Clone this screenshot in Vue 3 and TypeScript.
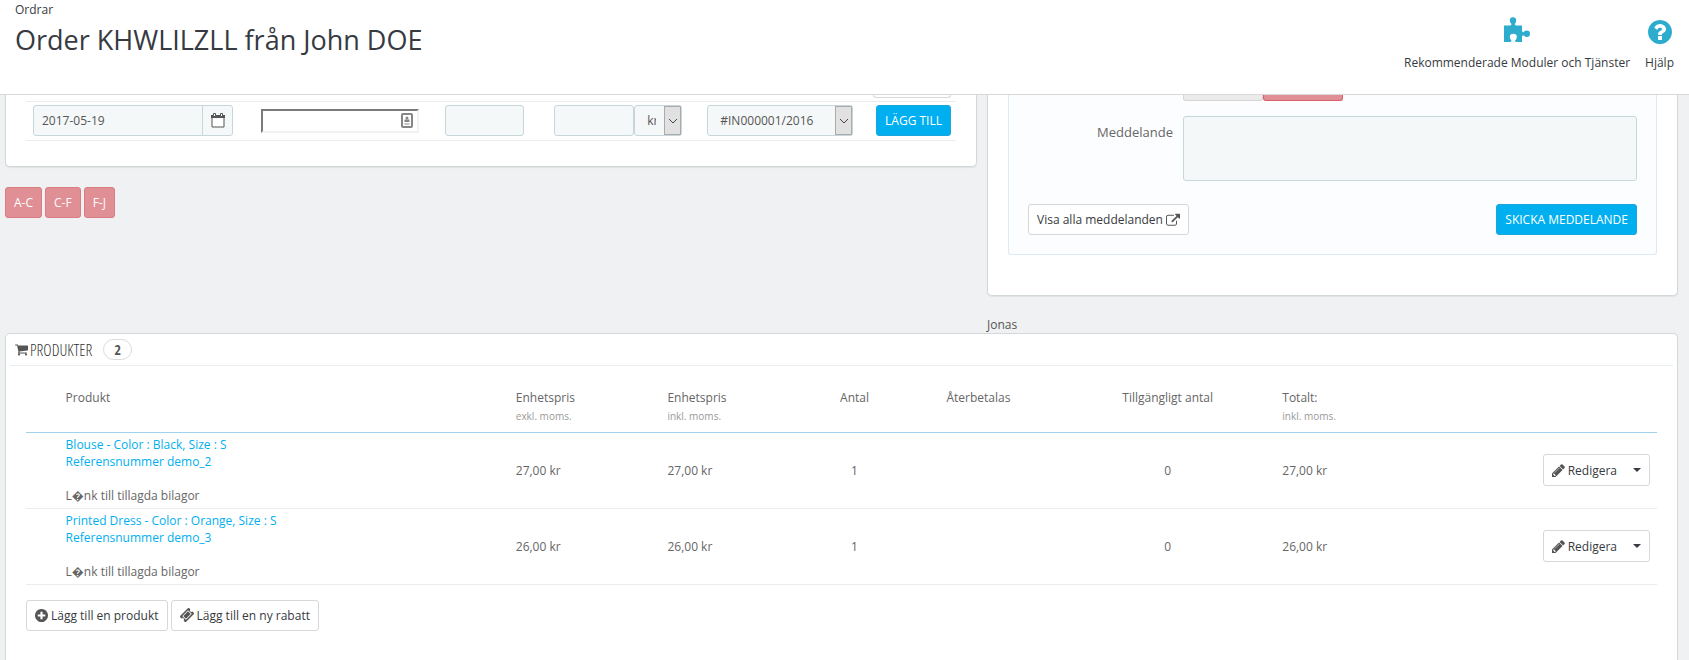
<script setup lang="ts">
import { ref } from 'vue'

interface Column { label: string; note?: string; kind: string }
interface Product { name: string; reference: string; excl: string; incl: string; quantity: number; available: number; total: string }

const date = ref('2017-05-19')
const method = ref('')
const transaction = ref('')
const amount = ref('')
const currency = ref('kr')
const invoice = ref('#IN000001/2016')
const message = ref('')

const attachmentText = 'L\uFFFDnk till tillagda bilagor'
const groups = ['A-C', 'C-F', 'F-J']

const columns: Column[] = [
  { label: 'Produkt', kind: 'product' },
  { label: 'Enhetspris', note: 'exkl. moms.', kind: 'price' },
  { label: 'Enhetspris', note: 'inkl. moms.', kind: 'price' },
  { label: 'Antal', kind: 'quantity' },
  { label: 'Återbetalas', kind: 'refund' },
  { label: 'Tillgängligt antal', kind: 'available' },
  { label: 'Totalt:', note: 'inkl. moms.', kind: 'total' },
]

const products: Product[] = [
  { name: 'Blouse - Color : Black, Size : S', reference: 'Referensnummer demo_2', excl: '27,00 kr', incl: '27,00 kr', quantity: 1, available: 0, total: '27,00 kr' },
  { name: 'Printed Dress - Color : Orange, Size : S', reference: 'Referensnummer demo_3', excl: '26,00 kr', incl: '26,00 kr', quantity: 1, available: 0, total: '26,00 kr' },
]
</script>

<template>
  <div class="page">
    <header class="head">
      <div class="titles">
        <a class="crumb" href="#">Ordrar</a>
        <h1>Order KHWLILZLL från John DOE</h1>
      </div>
      <nav class="tools">
        <a href="#">
          <svg class="tool-icon" viewBox="0 0 26 26"><path d="M0 8.500h5.500q2 0 2-1.500Q5.800 5.500 5.800 3.500 5.800.3 9 .3t3.200 3.200Q12.200 5.500 10.800 7q0 1.500 2 1.500H18v5q0 1.800 1.500 1.800Q21 13.500 22.800 13.500q3.200 0 3.200 3.200t-3.200 3.200Q21 19.900 19.500 18.200 18 18.200 18 20v5h-5.500q-1.500 0-1.500-1.500 1.800-1.500 1.800-3.500 0-3.200-3.500-3.200T5.800 20q0 2 1.700 3.500Q7.500 25 6 25H0z" /></svg>
          <span>Rekommenderade Moduler och Tjänster</span>
        </a>
        <a href="#">
          <svg class="tool-icon" viewBox="128 128 1536 1536"><path d="M1024 1376v-192q0-14-9-23t-23-9h-192q-14 0-23 9t-9 23v192q0 14 9 23t23 9h192q14 0 23-9t9-23zm256-672q0-88-55.500-163t-138.500-116-170-41q-243 0-371 213-15 24 8 42l132 100q7 6 19 6 16 0 25-12 53-68 86-92 34-24 86-24 48 0 85.500 26t37.500 59q0 38-20 61t-68 45q-63 28-115.500 86.500t-52.500 125.500v36q0 14 9 23t23 9h192q14 0 23-9t9-23q0-19 21.500-49.500t54.500-49.500q32-18 49-28.500t46-35 44.500-48 28-60.500 12.500-81zm384 192q0 209-103 385.500t-279.500 279.500-385.500 103-385.500-103-279.500-279.500-103-385.500 103-385.500 279.500-279.500 385.500-103 385.500 103 279.500 279.500 103 385.500z" /></svg>
          <span>Hjälp</span>
        </a>
      </nav>
    </header>

    <main>
      <div class="columns">
        <div class="left">
          <section class="panel payments">
            <div class="previous-row"><button class="btn stub" type="button" aria-label="Detaljer"></button></div>
            <form class="payment-row" @submit.prevent>
              <div class="date-group">
                <input v-model="date" type="text" aria-label="Datum" />
                <button type="button" aria-label="Kalender">
                  <svg class="calendar" viewBox="0 0 14 15"><path d="M1 4.500h12V14H1z" fill="#fff" stroke="currentColor" /><path d="M0 2h14v3H0z" /><path d="M2.500.5h2v3h-2zM9.500.5h2v3h-2z" fill="#fff" stroke="currentColor" /></svg>
                </button>
              </div>
              <div class="method">
                <input v-model="method" type="text" aria-label="Betalningsmetod" />
                <svg viewBox="0 0 12 15"><rect x="1" y="1" width="10" height="13" rx="1" fill="#fff" stroke="#858585" stroke-width="2" /><circle cx="6" cy="5" r="1.500" fill="#858585" /><path d="M3.500 6.500h5V9h-5zM3.500 10.500h5v1h-5z" fill="#858585" /></svg>
              </div>
              <input v-model="transaction" class="field transaction" type="text" aria-label="Transaktions-ID" />
              <div class="amount-group">
                <input v-model="amount" class="field" type="text" aria-label="Belopp" />
                <div class="select currency">
                  <select v-model="currency" aria-label="Valuta"><option>kr</option></select>
                  <span class="arrow"><svg viewBox="0 0 10 6"><path d="M1 1l4 4 4-4" /></svg></span>
                </div>
              </div>
              <div class="select invoice">
                <select v-model="invoice" aria-label="Faktura"><option>#IN000001/2016</option></select>
                <span class="arrow"><svg viewBox="0 0 10 6"><path d="M1 1l4 4 4-4" /></svg></span>
              </div>
              <button class="btn primary" type="submit">LÄGG TILL</button>
            </form>
          </section>
          <div class="groups">
            <button v-for="group in groups" :key="group" class="btn danger" type="button">{{ group }}</button>
          </div>
        </div>

        <div class="right">
          <section class="panel messages">
            <form class="well" @submit.prevent>
              <div class="switch">
                <button type="button" aria-label="Ja"></button>
                <button class="no" type="button" aria-label="Nej"></button>
              </div>
              <div class="message-row">
                <label for="message">Meddelande</label>
                <textarea id="message" v-model="message"></textarea>
              </div>
              <div class="message-actions">
                <a class="btn" href="#">Visa alla meddelanden
                  <svg class="icon large" viewBox="64 64 1792 1600"><path d="M1472 992v320q0 119-84.500 203.500t-203.500 84.500h-832q-119 0-203.500-84.500t-84.500-203.500v-832q0-119 84.500-203.500t203.500-84.500h704q14 0 23 9t9 23v64q0 14-9 23t-23 9h-704q-66 0-113 47t-47 113v832q0 66 47 113t113 47h832q66 0 113-47t47-113v-320q0-14 9-23t23-9h64q14 0 23 9t9 23zm384-864v512q0 26-19 45t-45 19-45-19l-176-176-652 652q-10 10-23 10t-23-10l-114-114q-10-10-10-23t10-23l652-652-176-176q-19-19-19-45t19-45 45-19h512q26 0 45 19t19 45z" /></svg>
                </a>
                <button class="btn primary" type="submit">SKICKA MEDDELANDE</button>
              </div>
            </form>
          </section>
          <div class="employee">Jonas</div>
        </div>
      </div>

      <section class="panel products">
        <h2>
          <svg class="icon" viewBox="64 128 1664 1536"><path d="M704 1536q0 52-38 90t-90 38-90-38-38-90 38-90 90-38 90 38 38 90zm896 0q0 52-38 90t-90 38-90-38-38-90 38-90 90-38 90 38 38 90zm128-1088v512q0 24-16.500 42.500t-40.500 21.500l-1044 122q13 60 13 70 0 16-24 64h920q26 0 45 19t19 45-19 45-45 19h-1024q-26 0-45-19t-19-45q0-11 8-31.500t16-36 21.500-40 15.500-29.500l-177-823h-204q-26 0-45-19t-19-45 19-45 45-19h256q16 0 28.500 6.500t19.500 15.500 13 24.500 8 26 5.500 29.500 4.500 26h1201q26 0 45 19t19 45z" /></svg>
          <span>PRODUKTER</span>
          <span class="badge">2</span>
        </h2>
        <table>
          <colgroup>
            <col class="c-thumb" /><col class="c-product" /><col class="c-price" /><col class="c-price" /><col class="c-quantity" /><col class="c-refund" /><col class="c-available" /><col class="c-total" /><col class="c-actions" />
          </colgroup>
          <thead>
            <tr>
              <th></th>
              <th v-for="(column, i) in columns" :key="i" :class="column.kind">
                {{ column.label }}<small v-if="column.note">{{ column.note }}</small>
              </th>
              <th></th>
            </tr>
          </thead>
          <tbody>
            <tr v-for="product in products" :key="product.reference">
              <td></td>
              <td><a href="#">{{ product.name }}<br />{{ product.reference }}</a><p>{{ attachmentText }}</p></td>
              <td>{{ product.excl }}</td>
              <td>{{ product.incl }}</td>
              <td class="quantity">{{ product.quantity }}</td>
              <td></td>
              <td class="available">{{ product.available }}</td>
              <td>{{ product.total }}</td>
              <td class="actions">
                <div class="split">
                  <button class="edit" type="button">
                    <svg class="icon" viewBox="128 128 1536 1536"><path d="M491 1536l91-91-235-235-91 91v107h128v128h107zm523-928q0-22-22-22-10 0-17 7l-542 542q-7 7-7 17 0 22 22 22 10 0 17-7l542-542q7-7 7-17zm-54-192l416 416-832 832h-416v-416zm683 96q0 53-37 90l-166 166-416-416 166-165q36-38 90-38 53 0 91 38l235 234q37 39 37 91z" /></svg>
                    Redigera
                  </button>
                  <button class="more" type="button" aria-label="Fler val"><span class="caret"></span></button>
                </div>
              </td>
            </tr>
          </tbody>
        </table>
        <div class="product-actions">
          <button class="btn" type="button">
            <svg class="icon" viewBox="128 128 1536 1536"><path d="M1344 960v-128q0-26-19-45t-45-19h-256v-256q0-26-19-45t-45-19h-128q-26 0-45 19t-19 45v256h-256q-26 0-45 19t-19 45v128q0 26 19 45t45 19h256v256q0 26 19 45t45 19h128q26 0 45-19t19-45v-256h256q26 0 45-19t19-45zm320-64q0 209-103 385.500t-279.500 279.500-385.500 103-385.500-103-279.500-279.500-103-385.500 103-385.500 279.500-279.500 385.500-103 385.500 103 279.500 279.500 103 385.500z" /></svg>
            Lägg till en produkt
          </button>
          <button class="btn" type="button">
            <svg class="icon large" viewBox="50 50 1692 1692"><path d="M1024 452l316 316-572 572-316-316zm-211 979l618-618q19-19 19-45t-19-45l-362-362q-18-18-45-18t-45 18l-618 618q-19 19-19 45t19 45l362 362q18 18 45 18t45-18zm889-637l-907 908q-37 37-90.500 37t-90.500-37l-126-126q56-56 56-136t-56-136-136-56-136 56l-125-126q-37-37-37-90.500t37-90.500l907-906q37-37 90.500-37t90.500 37l125 125q-56 56-56 136t56 136 136 56 136-56l126 125q37 37 37 90.500t-37 90.500z" /></svg>
            Lägg till en ny rabatt
          </button>
        </div>
      </section>
    </main>
  </div>
</template>

<style>
body { margin: 0; background: #eff1f2; }
</style>

<style scoped>
* { box-sizing: border-box; }
.page { height: 100vh; overflow: hidden; display: flex; flex-direction: column; background: #eff1f2; color: #555; font: 12px/17px "Open Sans", "Noto Sans", sans-serif; }
a { color: #00aff0; text-decoration: none; }
button, input, select, textarea { font: inherit; color: inherit; margin: 0; }
svg { display: block; fill: currentColor; flex: none; }

.head { flex: none; height: 95px; display: flex; justify-content: space-between; padding: 0 15px; background: #fff; border-bottom: 1px solid #d8d8d8; color: #363a41; }
.crumb { display: block; margin-top: 1px; color: #363a41; }
h1 { margin: 4px 0 0; font-size: 27px; line-height: 36px; font-weight: 400; }
.tools { display: flex; gap: 15px; padding-top: 17px; }
.tools a { display: flex; flex-direction: column; align-items: center; color: #363a41; }
.tool-icon { width: 26px; height: 26px; color: #2eacce; margin-bottom: 11px; }
.tools a:last-child .tool-icon { width: 24px; height: 24px; margin: 3px 0 10px; }

main { flex: 1; min-height: 0; display: flex; flex-direction: column; padding: 0 11px 0 5px; }
.columns { flex: none; display: grid; grid-template-columns: minmax(0, 972fr) minmax(0, 691fr); gap: 10px; }
.panel { background: #fff; border: 1px solid #d3d8db; border-radius: 5px; box-shadow: 0 1px 1px #dfe2e4; }
.payments, .messages { border-top: 0; border-top-left-radius: 0; border-top-right-radius: 0; }
.payments { padding: 0 20px 25px; }
.previous-row { display: flex; justify-content: flex-end; height: 7px; padding-right: 5px; border-bottom: 1px solid #eaedef; }
.btn { display: inline-flex; align-items: center; justify-content: center; gap: 3px; height: 31px; padding: 0 8px; border: 1px solid #d6d8da; border-radius: 3px; background: #fff; color: #363a41; white-space: nowrap; }
.btn.stub { width: 78px; height: 3px; border-top: 0; border-radius: 0 0 3px 3px; }
.btn.primary { background: #00aff0; border-color: #1ea6dc; color: #fff; }
.payment-row { display: flex; align-items: center; padding: 3px 5px 4px 7px; border-bottom: 1px solid #eaedef; height: 39px; }
.field, .date-group, .select { height: 31px; background: #f5f8f9; border: 1px solid #c7d6db; border-radius: 3px; }
.field { min-width: 0; }
.date-group { display: flex; flex: 1 1 200px; margin-right: 28px; min-width: 0; }
.date-group input { flex: 1; min-width: 0; padding: 0 8px; border: 0; background: none; }
.date-group button { width: 30px; padding: 0 0 0 8px; border: 0; border-left: 1px solid #c7d6db; background: none; }
.calendar { width: 14px; height: 15px; }
.method { flex: 1 1 158px; display: flex; align-items: center; height: 24px; margin-right: 26px; padding-right: 4px; border: 2px solid; border-color: #7b7b7b #f2f2f2 #f2f2f2 #7b7b7b; min-width: 0; }
.method input { flex: 1; min-width: 0; height: 19px; border: 0; padding: 0 2px; background: none; }
.method svg { width: 12px; height: 15px; }
.transaction { flex: 1 1 80px; margin-right: 30px; }
.amount-group { display: flex; flex: 1 1 128px; margin-right: 25px; min-width: 0; }
.amount-group .field { flex: 1 1 80px; }
.select { display: flex; min-width: 0; }
.select select { flex: 1; min-width: 0; appearance: none; border: 0; background: none; padding: 0 0 0 12px; }
.select .arrow { width: 17px; flex: none; margin-left: auto; display: flex; align-items: center; justify-content: center; background: #e1e1e1; border: 1px solid #ababab; pointer-events: none; }
.arrow svg { width: 10px; height: 6px; fill: none; stroke: #444; }
.currency { flex: 0 0 48px; }
.currency select { width: 21px; flex: none; overflow: hidden; text-overflow: clip; }
.invoice { flex: 1 1 146px; margin-right: 23px; }
.groups { display: flex; gap: 3px; margin-top: 20px; }
.btn.danger { background: #e08f95; border-color: #dc7b83; color: #fff; }

.messages { padding: 0 20px 40px; }
.well { display: block; padding: 0 19px 19px; background: #fcfdfe; border: 1px solid #deeaf3; border-top: 0; border-radius: 0 0 3px 3px; }
.switch { display: flex; margin-left: 155px; height: 6px; }
.switch button { width: 80px; padding: 0; border: 1px solid #d6d6d6; border-top: 0; border-radius: 0 0 3px 3px; background: #ebebeb; }
.switch .no { background: #e08f95; border-color: #d9606b; }
.message-row { display: flex; margin-top: 15px; }
.message-row label { width: 145px; margin-right: 10px; padding-top: 8px; text-align: right; color: #666; font-size: 13px; }
textarea { flex: 1; min-width: 0; height: 65px; resize: none; background: #f5f8f9; border: 1px solid #c7d6db; border-radius: 3px; }
.message-actions { display: flex; justify-content: space-between; margin-top: 23px; }
.icon { width: 13px; height: 13px; color: #555; }
.icon.large { width: 14px; height: 14px; }
.employee { margin-top: 20px; }

.products { flex: 1; min-height: 0; border-bottom: 0; border-radius: 5px 5px 0 0; box-shadow: none; }
h2 { display: flex; align-items: center; gap: 2px; margin: 0 4px; height: 32px; padding: 0 5px; border-bottom: 1px solid #eaedef; color: #333; font: 300 16px/20px "Open Sans Condensed Light", "Open Sans Condensed", "Open Sans", sans-serif; }
.badge { margin-left: 9px; width: 29px; height: 21px; border: 1px solid #d8dbdd; border-radius: 11px; font-family: "Open Sans Condensed", "Open Sans", sans-serif; font-size: 14px; font-weight: 700; line-height: 19px; text-align: center; color: #555; }
table { width: calc(100% - 40px); margin: 19px 20px 0; table-layout: fixed; border-collapse: collapse; }
.c-thumb { width: 2%; }
.c-product { width: 27.6%; }
.c-price { width: 9.3%; }
.c-quantity { width: 5.2%; }
.c-refund { width: 10%; }
.c-available { width: 13.2%; }
.c-total { width: 7.4%; }
.c-actions { width: 16%; }
th { height: 47px; padding: 4px 7px 0; text-align: left; vertical-align: top; font-weight: 400; color: #666; border-bottom: 1px solid #a0d0eb; }
th small { display: block; font-size: 10px; line-height: 20px; color: #999; }
td { padding: 3px 7px; height: 76px; border-bottom: 1px solid #eaedef; color: #666; }
td p { margin: 17px 0 0; }
th.quantity, th.refund, th.available, .quantity, .available { text-align: center; }
.actions { text-align: right; }
.split { display: inline-flex; height: 32px; border: 1px solid #d6d8da; border-radius: 3px; background: #fff; vertical-align: middle; }
.split button { display: flex; align-items: center; gap: 3px; border: 0; padding: 0 8px; background: none; color: #363a41; }
.caret { border: 4px solid transparent; border-top-color: #363a41; border-bottom: 0; }
.product-actions { display: flex; gap: 3px; margin: 15px 20px; }
</style>
